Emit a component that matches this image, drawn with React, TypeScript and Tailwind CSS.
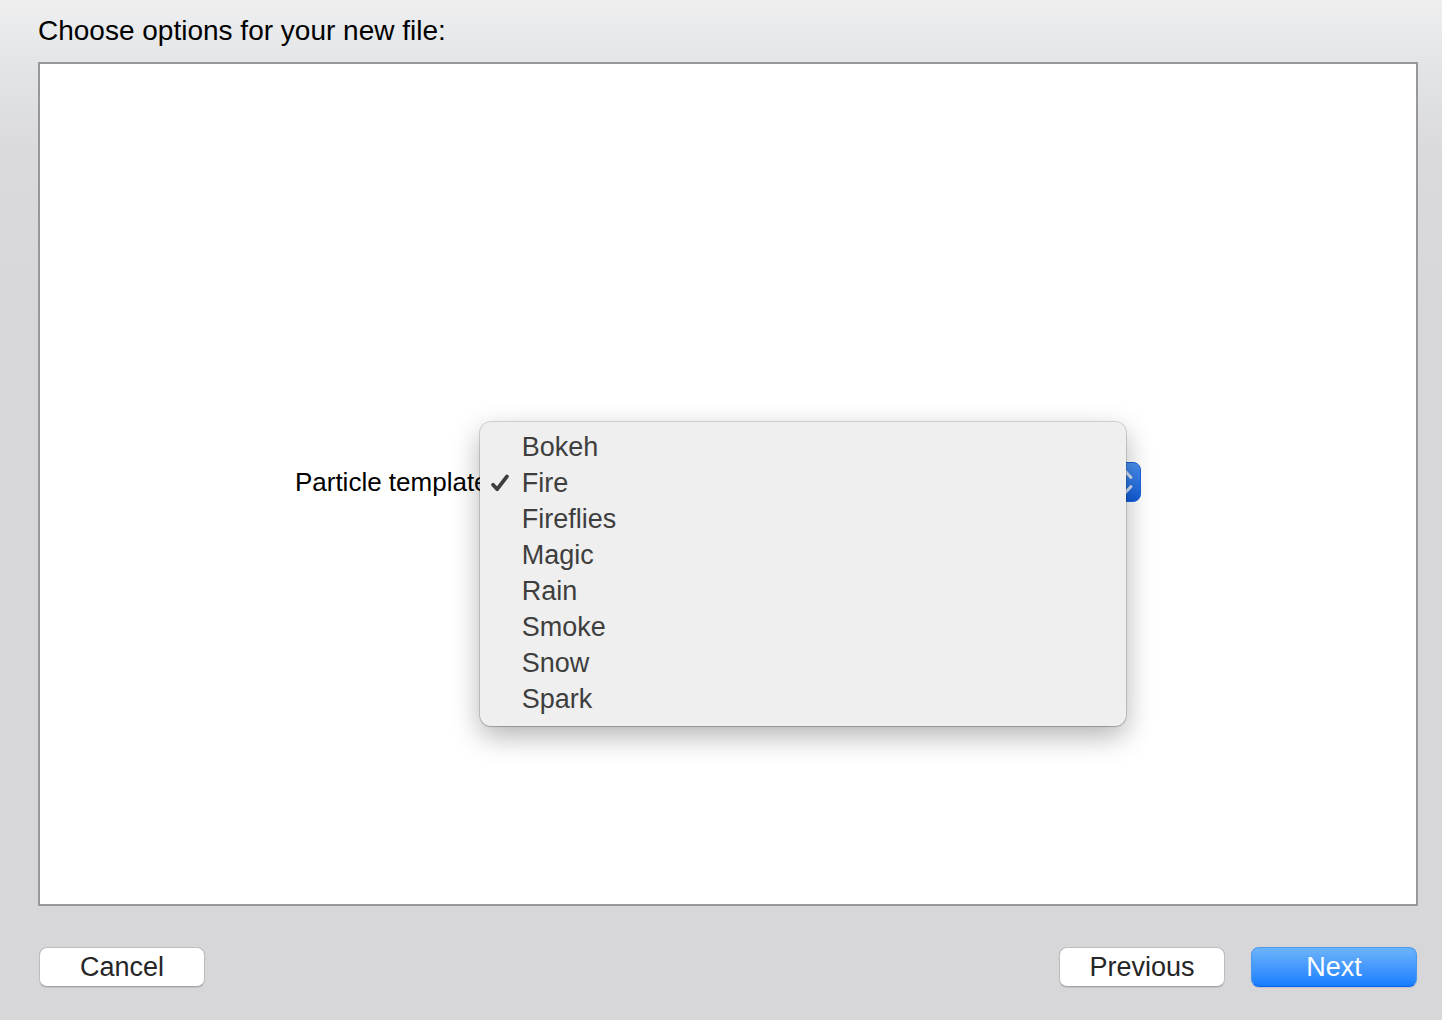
import { useState } from "react";

const templates = ["Bokeh", "Fire", "Fireflies", "Magic", "Rain", "Smoke", "Snow", "Spark"];

const plainButton =
  "h-10 w-[166px] rounded-lg border border-[#bdbdc0] border-b-[#a3a3a6] bg-white text-[27px] leading-9 text-[#262626] shadow-[0_1px_1px_rgba(0,0,0,0.1)]";

function CheckMark() {
  return (
    <svg viewBox="0 0 20 20" className="h-5 w-5" fill="none" stroke="currentColor" aria-hidden="true">
      <path d="M3 11.8 7.2 16.2 17 3.4" strokeWidth="3.8" strokeLinecap="round" strokeLinejoin="round" />
    </svg>
  );
}

function Arrows() {
  return (
    <svg viewBox="0 0 32 40" className="h-10 w-8" fill="none" stroke="#d3e1f7" strokeWidth="3" strokeLinecap="round" strokeLinejoin="round" aria-hidden="true">
      <path d="M9 15.5 15.5 8.5 22 15.5M9 24.5 15.5 31.5 22 24.5" />
    </svg>
  );
}

export default function App() {
  const [selected, setSelected] = useState("Fire");

  return (
    <main className="flex min-h-screen flex-col bg-[#d7d7db] bg-[linear-gradient(to_bottom,#efeff0_0,#e3e5e7_60px,#dadadd_150px,#d7d7da_320px)] pr-6 pl-[38px] font-['Liberation_Sans',Arial,sans-serif] text-black">
      <h1 className="flex h-[62px] items-center text-[28px] leading-8">Choose options for your new file:</h1>

      <section className="flex flex-1 items-center justify-center border-2 border-[#989898] bg-white pr-5 pb-1">
        <div className="flex w-[62.4%] items-center gap-2">
          <label htmlFor="template" className="shrink-0 text-[26px] leading-8">
            Particle template:
          </label>
          <div className="relative flex-1">
            <select
              id="template"
              value={selected}
              onChange={(e) => setSelected(e.target.value)}
              className="block h-10 w-full appearance-none rounded-lg border border-[#c4c4c4] bg-white pr-9 pl-4 text-[27px] leading-9"
            >
              {templates.map((name) => (
                <option key={name}>{name}</option>
              ))}
            </select>
            <span className="pointer-events-none absolute top-0 right-0 h-10 w-8 rounded-r-lg border border-[#1a63e0] bg-linear-to-b from-[#4a91f0] to-[#0f5cd8]">
              <span className="absolute -top-px -left-px">
                <Arrows />
              </span>
            </span>
            <ul
              role="listbox"
              aria-label="Particle template"
              className="absolute -top-10 right-[15px] -left-6 rounded-[11px] bg-[#efefef] pt-[7px] pb-[9px] text-[27px] leading-9 text-[#3e3e3e] shadow-[0_0_0_1px_rgba(0,0,0,0.14),0_1px_1px_rgba(0,0,0,0.12),0_10px_28px_rgba(0,0,0,0.3)]"
            >
              {templates.map((name) => (
                <li key={name} role="option" aria-selected={name === selected}>
                  <button type="button" onClick={() => setSelected(name)} className="flex h-9 w-full items-center gap-3 pl-2.5 text-left">
                    <span className="flex w-5 shrink-0">{name === selected && <CheckMark />}</span>
                    {name}
                  </button>
                </li>
              ))}
            </ul>
          </div>
        </div>
      </section>

      <footer className="flex h-[114px] items-start gap-[26px] pt-[41px] pr-px pl-px">
        <button type="button" className={plainButton}>Cancel</button>
        <button type="button" className={`${plainButton} ml-auto`}>Previous</button>
        <button
          type="button"
          className="h-10 w-[166px] rounded-lg border border-[#4a97ee] border-b-[#0a62f5] bg-linear-to-b from-[#6cb3fa] to-[#147dff] text-[27px] leading-9 text-white shadow-[0_1px_1px_rgba(0,0,0,0.1)]"
        >
          Next
        </button>
      </footer>
    </main>
  );
}
